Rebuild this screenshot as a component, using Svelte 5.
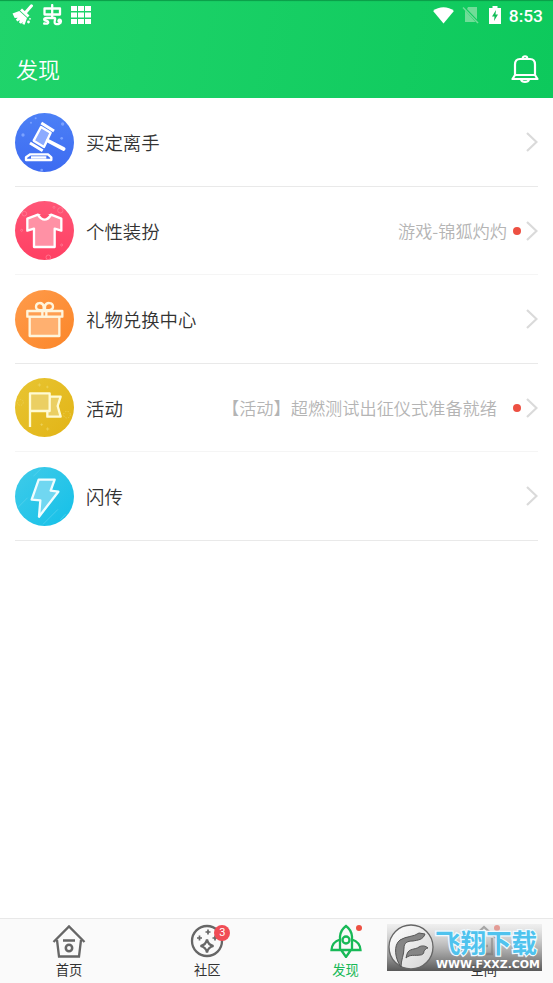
<script lang="ts">
  type Row = { icon: string; title: string; detail?: string; wide?: boolean };

  const rows: Row[] = [
    { icon: 'gavel', title: '买定离手' },
    { icon: 'shirt', title: '个性装扮', detail: '游戏-锦狐灼灼' },
    { icon: 'gift', title: '礼物兑换中心' },
    { icon: 'flag', title: '活动', detail: '【活动】超燃测试出征仪式准备就绪', wide: true },
    { icon: 'bolt', title: '闪传' }
  ];

  const tabs = [
    { id: 'home', label: '首页' },
    { id: 'community', label: '社区' },
    { id: 'discover', label: '发现' },
    { id: 'space', label: '空间' }
  ];

  let active = $state('discover');
</script>

<div class="screen">
  <header class="top">
    <div class="status">
      <div class="status-left">
        <svg width="22" height="22" viewBox="0 0 22 22">
          <path d="M19.500 1.800 14 8" stroke="#fff" stroke-width="3" stroke-linecap="round" />
          <path d="m10 4.500 7.500 7-1.900 2-7.600-7z" fill="#fff" />
          <path d="m7.300 7 7.700 7-2.400 6.700-2.300-.7.500-2-1.800 1.700-2-1.200.8-2.400-2.500 1.300-1.400-2 1.800-1.600-3 .1L.5 9.500z" fill="#fff" />
          <circle cx="16.500" cy="18" r="1.400" fill="#fff" />
          <circle cx="18" cy="14.800" r=".9" fill="#fff" />
        </svg>
        <svg width="21" height="22" viewBox="0 0 21 22" fill="none" stroke="#fff" stroke-width="2.300" stroke-linecap="round" stroke-linejoin="round">
          <path d="M2.500 4.500h15.500v6H2.500zM10.200 1v12.500M2.200 19.500c4 .8 4.500-1 3.500-2.200-1.500-1.300-3.500-.3-3.500-1.700 0-1 1-1.600 2.500-1.600h7.800c2 0-1.500 5 1 5.800 2.500.8 5.700-.3 5.400-2.800-.3-1.900-3-1.500-2.300.3" />
        </svg>
        <svg width="20" height="18" viewBox="0 0 20 18" fill="#fff">
          {#each [0, 7, 14] as x}
            {#each [0, 6.5, 13] as y}
              <rect {x} {y} width="6" height="5" />
            {/each}
          {/each}
        </svg>
      </div>
      <div class="status-right">
        <svg class="wifi" width="21" height="17" viewBox="0 0 22 18"><path d="M0 4.300C6-1 16-1 22 4.300L11 17.500z" fill="#fff" /></svg>
        <svg class="sim" width="17" height="18" viewBox="0 0 17 18">
          <path d="M6 1h9v12.500L5 3zM3 4.500V16h10.500z" fill="#70dd98" />
          <path d="m1 1.500 15 15.500" stroke="#70dd98" stroke-width="1.500" />
        </svg>
        <svg class="battery" width="12" height="18" viewBox="0 0 12 18">
          <path d="M0 2h3.500V0h5v2H12v16H0z" fill="#fff" />
          <path d="M7 4 3 10.500h2.500L5 15l4-6.500H6.500z" fill="#11bd58" />
        </svg>
        <span class="clock">8:53</span>
      </div>
    </div>
    <div class="title-bar">
      <h1>发现</h1>
      <svg class="bell" width="28" height="29" viewBox="0 0 28 29" fill="none" stroke="#fff" stroke-width="2.200" stroke-linejoin="round">
        <path d="M4 20V9.500Q4 4 9 4h10q5 0 5 5.500V20M4 20l-2.500 4h25L24 20zM4 20h20" />
        <path d="M11.700 3.500C11.700.500 16.300.500 16.300 3.500M10 24.500c1 3.200 7 3.200 8 0" />
      </svg>
    </div>
  </header>

  <main class="list">
    {#each rows as row}
      <div class="row">
        <svg class="row-icon {row.icon}" viewBox="0 0 177 177" fill="none" stroke="#fff" stroke-width="7" stroke-linejoin="round">
          {#if row.icon === 'gavel'}
            <g class="specks">
              <circle cx="24" cy="66" r="5" /><circle cx="143" cy="33" r="5" /><circle cx="140" cy="76" r="4" />
              <circle cx="80" cy="171" r="4" /><circle cx="48" cy="29" r="3" /><circle cx="62" cy="16" r="3" />
            </g>
            <path d="m78 42 29 17-20 43-31-19z" fill="#8cabff" />
            <path d="m79 30 38 24M45 90l38 23" stroke-width="9" />
            <path d="m98 83 48 25" stroke-width="11" stroke-linecap="round" />
            <path d="M46 124h53l10 9v8H33v-8zM48 133h46" />
          {:else if row.icon === 'shirt'}
            <g class="rings">
              <circle cx="136" cy="28" r="8" /><circle cx="28" cy="38" r="7" /><circle cx="100" cy="169" r="7" />
              <circle cx="117" cy="19" r="3" /><circle cx="20" cy="88" r="3" /><circle cx="140" cy="132" r="3" />
            </g>
            <path d="M69 41 37 53v36l20-6v55h62V83l20 6V53l-31-12q-19 13-39 0z" fill="#ff91a5" />
            <path d="M69 42q20 28 39 0" fill="#ff4d6d" />
          {:else if row.icon === 'gift'}
            <path d="M44 80h89v58H44z" fill="#ffb070" />
            <path d="M37 63h105v17H37zM82 63v17M94 63v17" fill="#ff9f52" />
            <path d="M86 60C75 62 63 61 63 50c0-14 21-15 23 0zM90 60c11 2 24 1 24-10 0-14-22-15-24 0z" />
          {:else if row.icon === 'flag'}
            <g class="sparks">
              <path d="M68 21h10M73 16v10M93 27h8M97 23v8M76 140h8M80 136v8M93 153h10M98 148v10" />
              <circle cx="16" cy="73" r="9" stroke-dasharray="4 4" /><circle cx="156" cy="110" r="10" stroke-dasharray="4 4" />
            </g>
            <path d="M104 56h33l-9 28 9 32H97V98z" fill="#ebcf63" />
            <path d="M45 147V46h59v53H45" fill="#ebcf63" />
          {:else}
            <path class="streaks" d="m0 130 38-38M84 172l45-45M55 28l22-22M136 158l16-17" />
            <path d="M71 38h48l-12 33 23 3-58 75 4-49-26-2z" fill="#70d7f1" />
          {/if}
        </svg>
        <span class="row-title">{row.title}</span>
        {#if row.detail}
          <span class="detail" class:wide={row.wide}>{row.detail}</span>
          <i class="dot"></i>
        {/if}
        <svg class="chevron" width="12" height="20" viewBox="0 0 12 20" fill="none" stroke="#dadada" stroke-width="2.200">
          <path d="m1 1 9.500 9L1 19" />
        </svg>
      </div>
    {/each}
  </main>

  <nav class="tabs">
    {#each tabs as tab}
      <button class="tab" class:active={active === tab.id} onclick={() => (active = tab.id)}>
        <span class="tab-icon">
          <svg width="34" height="34" viewBox="0 0 34 34" fill="none" stroke="currentColor" stroke-width="2.300">
            {#if tab.id === 'home'}
              <path d="M1.500 18 17 2.500 32.500 18M5 16l2 16.500h20L29 16M11 16.500h12" />
              <circle cx="17" cy="24" r="3.200" stroke-width="2.500" />
            {:else if tab.id === 'community'}
              <circle cx="17" cy="17" r="15" />
              <path d="M17 15.500q1 5.300 6.500 6.500-5.500 1.200-6.500 6.500-1-5.300-6.500-6.500 5.500-1.200 6.500-6.500z" />
              <path d="M18 5.500v5M15.500 8h5M9.500 11.500v5M7 14h5M25 11.500v5M22.500 14h5" stroke-width="1.700" />
            {:else if tab.id === 'discover'}
              <path d="M11 26V12.500Q11.500 6 17 2q5.500 4 6 10.500V26zM11 15.500Q3 18 2.500 26H11M23 15.500q8 2.500 8.500 10.500H23M12.500 26.500 17 33l4.500-6.500" />
              <circle cx="17" cy="16" r="3.500" />
            {:else}
              <path d="M5 14 17 3l12 11M9 14v16h16V14M13 22h8" />
            {/if}
          </svg>
          {#if tab.id === 'community'}<b class="badge">3</b>{/if}
          {#if tab.id === 'discover' || tab.id === 'space'}<i class="tab-dot"></i>{/if}
        </span>
        <span class="tab-label">{tab.label}</span>
      </button>
    {/each}
  </nav>

  <svg class="watermark" width="155" height="47" viewBox="0 0 155 47">
    <defs>
      <linearGradient id="shade" x1="0" y1="0" x2="0" y2="1">
        <stop offset="0" stop-color="#e4e4e4" stop-opacity=".5" />
        <stop offset=".5" stop-color="#a3a3a3" stop-opacity=".8" />
        <stop offset="1" stop-color="#505050" stop-opacity=".95" />
      </linearGradient>
      <linearGradient id="disc" x1="0" y1="0" x2="1" y2="1">
        <stop offset="0" stop-color="#fff" />
        <stop offset="1" stop-color="#d4d4d4" />
      </linearGradient>
    </defs>
    <rect width="155" height="47" fill="url(#shade)" />
    <circle cx="24" cy="23" r="22" fill="url(#disc)" stroke="#666" stroke-width="1.300" />
    <g fill="#858585" stroke="#555" stroke-width="1" stroke-linejoin="round">
      <path d="M14 43C8 35 6 21 13 16c6-4 14-3 19-7l6 1c-2 6-7 6-12 7-6 0-9 2-9 7 0 7-3 12-3 19z" />
      <path d="M20 30c2-6 8-4 12-7 3-2 7-1 9 1-2 0-3 2-4 3 0 3-2 4-4 4-5 1-10-1-14 3z" />
    </g>
    <text class="brand" x="48" y="28.500" textLength="102" lengthAdjust="spacingAndGlyphs">飞翔下载</text>
    <text class="site" x="49" y="43.500" textLength="104" lengthAdjust="spacingAndGlyphs">WWW.FXXZ.COM</text>
  </svg>
</div>

<style>
  :global(body) {
    background: #fff;
  }

  .screen {
    position: relative;
    display: flex;
    flex-direction: column;
    height: 983px;
    overflow: hidden;
    font-family: 'Noto Sans CJK SC', sans-serif;
    color: #333;
  }

  .top {
    height: 98px;
    flex-shrink: 0;
    background: linear-gradient(100deg, #20d46b, #0dc95c);
    box-shadow: inset 0 2px 1px -1px #0a9c47;
    color: #fff;
  }

  .status {
    display: flex;
    justify-content: space-between;
    height: 30px;
    padding: 0 10px 0 12px;
  }

  .status-left {
    display: flex;
    align-items: flex-start;
    gap: 8px;
    padding-top: 4px;
  }

  .status-left svg:last-child {
    margin-top: 2px;
  }

  .status-right {
    display: flex;
    align-items: center;
  }

  .sim {
    margin-left: 8px;
  }

  .battery {
    margin-left: 10px;
  }

  .clock {
    margin: 2px 0 0 8px;
    font: 500 17.4px/20px Roboto, sans-serif;
  }

  .title-bar {
    display: flex;
    align-items: center;
    justify-content: space-between;
    height: 76px;
    padding: 0 14px 0 16px;
  }

  h1 {
    margin: 0;
    font-size: 22px;
    font-weight: 350;
    line-height: 32px;
  }

  .bell {
    margin-top: 2px;
  }

  .list {
    flex: 1;
    padding: 0 15px;
  }

  .row {
    box-sizing: border-box;
    display: flex;
    align-items: center;
    height: 88.5px;
    padding-top: 1px;
    border-bottom: 1px solid #e9e9e9;
  }

  .row:nth-child(2),
  .row:nth-child(4) {
    border-color: #f5f5f5;
  }

  .row-icon {
    width: 59px;
    height: 59px;
    flex-shrink: 0;
    border-radius: 50%;
  }

  .gavel {
    background: linear-gradient(#4c80f6, #3d6bf1);
  }

  .shirt {
    background: linear-gradient(#ff5677, #ff4063);
  }

  .gift {
    background: linear-gradient(135deg, #ff9b4b, #fb8629);
    stroke: #fff5dc;
  }

  .flag {
    background: linear-gradient(135deg, #e8c532, #e2b416);
    stroke: #fffbd3;
  }

  .bolt {
    background: linear-gradient(135deg, #40cbe9, #14c0e8);
    stroke: #effdff;
  }

  .specks {
    fill: #7ba2ff;
    stroke: none;
  }

  .rings {
    stroke: #ff7c95;
    stroke-width: 2.5;
  }

  .sparks {
    stroke: #efd663;
    stroke-width: 2;
  }

  .streaks {
    stroke: #5dd5ef;
    stroke-width: 2;
  }

  .row-title {
    margin-left: 12px;
    font-size: 18.4px;
    font-weight: 350;
    line-height: 28px;
  }

  .detail {
    margin-left: auto;
    font-size: 17.2px;
    font-weight: 350;
    line-height: 26px;
    color: #b4b4b4;
    white-space: nowrap;
  }

  .dot {
    width: 8px;
    height: 8px;
    margin: 0 5px 0 6px;
    border-radius: 50%;
    background: #ed5042;
  }

  .wide + .dot {
    margin-left: 16px;
  }

  .chevron {
    flex-shrink: 0;
    margin-left: auto;
  }

  .dot + .chevron {
    margin-left: 0;
  }

  .tabs {
    box-sizing: border-box;
    display: flex;
    height: 65px;
    flex-shrink: 0;
    border-top: 1px solid #e8e8e8;
    background: #fafafa;
  }

  .tab {
    display: flex;
    flex: 1;
    flex-direction: column;
    align-items: center;
    padding: 5px 0 0;
    border: 0;
    background: none;
    color: #666;
    font-family: inherit;
  }

  .tab-icon {
    position: relative;
    height: 34px;
  }

  .tab-label {
    margin-top: 2px;
    font-size: 13.3px;
    line-height: 20px;
    color: #333;
  }

  .active,
  .active .tab-label {
    color: #18b957;
  }

  .badge {
    position: absolute;
    top: 1px;
    left: 24px;
    width: 16px;
    height: 16px;
    border-radius: 50%;
    background: #f04c55;
    color: #fff;
    font: 400 11px/16px Roboto, sans-serif;
    text-align: center;
  }

  .tab-dot {
    position: absolute;
    top: 1px;
    left: 27px;
    width: 6px;
    height: 6px;
    border-radius: 50%;
    background: #ed5042;
  }

  .watermark {
    position: absolute;
    top: 924px;
    left: 387px;
    pointer-events: none;
  }

  .brand {
    font-size: 26px;
    font-weight: 700;
    fill: #4fc3ee;
    stroke: #effaff;
    stroke-width: 2.5px;
    paint-order: stroke;
  }

  .site {
    font: 700 10px 'DejaVu Sans', sans-serif;
    fill: #fff;
  }
</style>
